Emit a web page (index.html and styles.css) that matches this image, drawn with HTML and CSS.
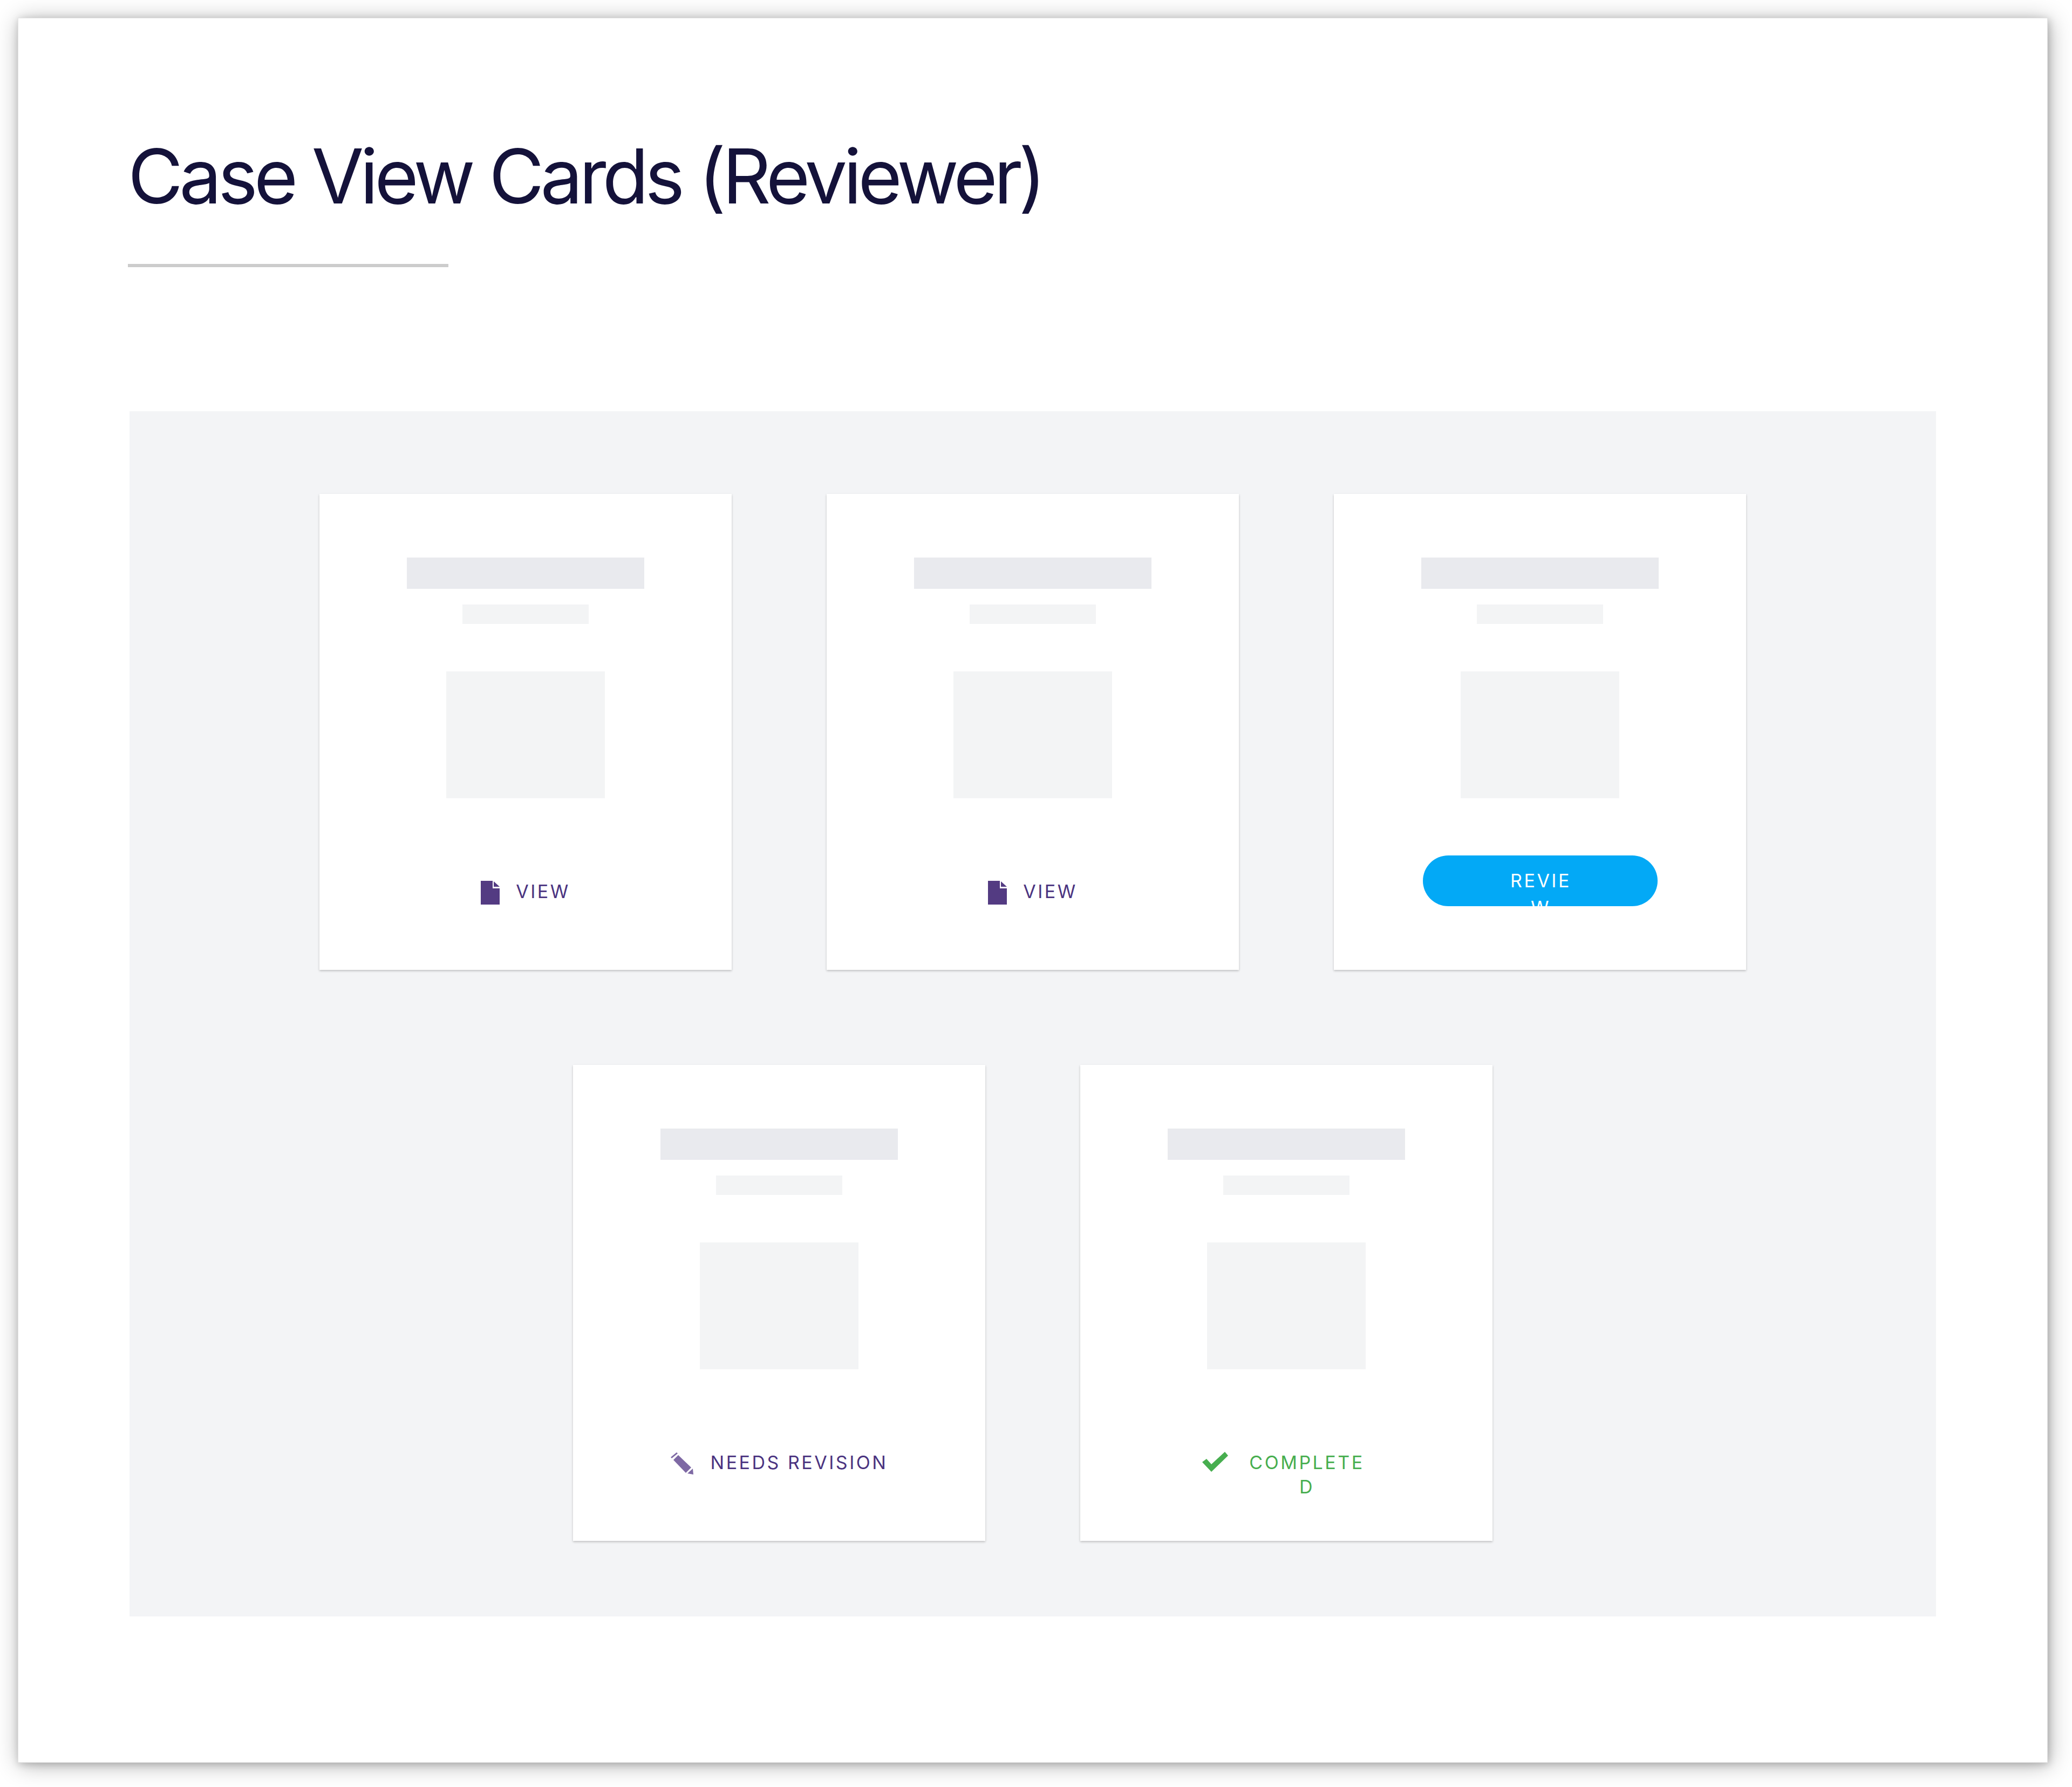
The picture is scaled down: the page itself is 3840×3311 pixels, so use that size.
FILE: index.html
```html
<!DOCTYPE html>
<html lang="en">
<head>
    <meta charset="UTF-8">
    <title>Case View Cards (Reviewer)</title>
    <link rel="stylesheet" href="styles.css">
</head>
<body>
    <div class="page">
        <h1 class="page-title">Case View Cards (Reviewer)</h1>
        <div class="title-rule"></div>

        <div class="panel">
            <div class="card">
                <div class="bar-title"></div>
                <div class="bar-sub"></div>
                <div class="thumb"></div>
                <div class="action action-purple">
                    <svg class="icon-file" viewBox="0 0 35 44"><path d="M0 0H22V14H35V44H0Z"/><path d="M24 1L35 11H24Z"/></svg>
                    <span>VIEW</span>
                </div>
            </div>
            <div class="card">
                <div class="bar-title"></div>
                <div class="bar-sub"></div>
                <div class="thumb"></div>
                <div class="action action-purple">
                    <svg class="icon-file" viewBox="0 0 35 44"><path d="M0 0H22V14H35V44H0Z"/><path d="M24 1L35 11H24Z"/></svg>
                    <span>VIEW</span>
                </div>
            </div>
            <div class="card">
                <div class="bar-title"></div>
                <div class="bar-sub"></div>
                <div class="thumb"></div>
                <button class="review-button"><span class="review-label">REVIEW</span></button>
            </div>
            <div class="card">
                <div class="bar-title"></div>
                <div class="bar-sub"></div>
                <div class="thumb"></div>
                <div class="action action-purple">
                    <svg class="icon-pencil" viewBox="0 0 42 41"><path d="M0 9L11 0L13 2L2 11Z"/><path d="M5 14L14 5L38 28L28 38Z"/><path d="M31 39L41 30L42 41Z"/></svg>
                    <span>NEEDS REVISION</span>
                </div>
            </div>
            <div class="card">
                <div class="bar-title"></div>
                <div class="bar-sub"></div>
                <div class="thumb"></div>
                <div class="action action-green">
                    <svg class="icon-check" viewBox="0 0 48 37"><path d="M0 19L8 13L17 23L42 0L48 7L17 37Z"/></svg>
                    <span class="label-completed">COMPLETED</span>
                </div>
            </div>
        </div>
    </div>
</body>
</html>
```

FILE: styles.css
```css
body {
    margin: 0;
    padding: 33px 0 45px 33px;
    background-color: #fff;
    font-family: Inter, "Liberation Sans", sans-serif;
}
.page {
    box-sizing: border-box;
    width: 3762px;
    height: 3233px;
    padding: 207px 206px 0;
    background-color: #fff;
    border: 1px solid #e4e4e4;
    box-shadow: 2px 3px 14px rgba(0, 0, 0, 0.2), 3px 4px 40px rgba(0, 0, 0, 0.3);
}
.page-title {
    margin: 2px 0 0 -3px;
    font-size: 140px;
    font-weight: 400;
    line-height: 166px;
    letter-spacing: -7px;
    color: #14123a;
}
.title-rule {
    width: 594px;
    height: 6px;
    margin: 80px 0 0 -3px;
    background-color: #ccc;
}
.panel {
    box-sizing: border-box;
    display: flex;
    flex-wrap: wrap;
    justify-content: center;
    align-content: flex-start;
    gap: 176px;
    width: 3348px;
    height: 2233px;
    margin-top: 267px;
    padding: 153px 0 0;
    background-color: #f3f4f6;
}
.card {
    box-sizing: border-box;
    display: flex;
    flex-direction: column;
    align-items: center;
    width: 764px;
    height: 882px;
    padding-top: 118px;
    background-color: #fff;
    box-shadow: 0 2px 4px rgba(0, 0, 0, 0.22);
}
.bar-title {
    width: 440px;
    height: 58px;
    background-color: #e9eaee;
}
.bar-sub {
    width: 234px;
    height: 36px;
    margin-top: 29px;
    background-color: #f3f4f5;
}
.thumb {
    width: 294px;
    height: 235px;
    margin-top: 88px;
    background-color: #f3f4f5;
}
.action {
    display: flex;
    align-items: flex-start;
    margin-top: 150px;
    font-size: 34px;
    line-height: 45px;
    letter-spacing: 3.5px;
    text-align: center;
}
.action-purple {
    color: #4a3380;
}
.action-green {
    color: #47ae4f;
}
.icon-file {
    width: 35px;
    height: 44px;
    margin: 3px 30px 0 0;
    fill: #533b82;
}
.icon-pencil {
    width: 42px;
    height: 41px;
    margin: 4px 32px 0 0;
    fill: #7e69a4;
}
.icon-check {
    width: 48px;
    height: 37px;
    margin: 3px 28px 0 0;
    fill: #47ae4f;
}
.label-completed {
    width: 236px;
    overflow-wrap: anywhere;
}
.review-button {
    display: block;
    width: 435px;
    height: 94px;
    margin-top: 106px;
    padding: 22px 0 0 3px;
    border: none;
    border-radius: 47px;
    overflow: hidden;
    background-color: #03a9f6;
    color: #fff;
    font-family: inherit;
    font-size: 34px;
    line-height: 50px;
    letter-spacing: 3.5px;
    text-align: center;
}
.review-label {
    display: block;
    width: 130px;
    height: 100px;
    margin: 0 auto;
    overflow-wrap: anywhere;
}
```
